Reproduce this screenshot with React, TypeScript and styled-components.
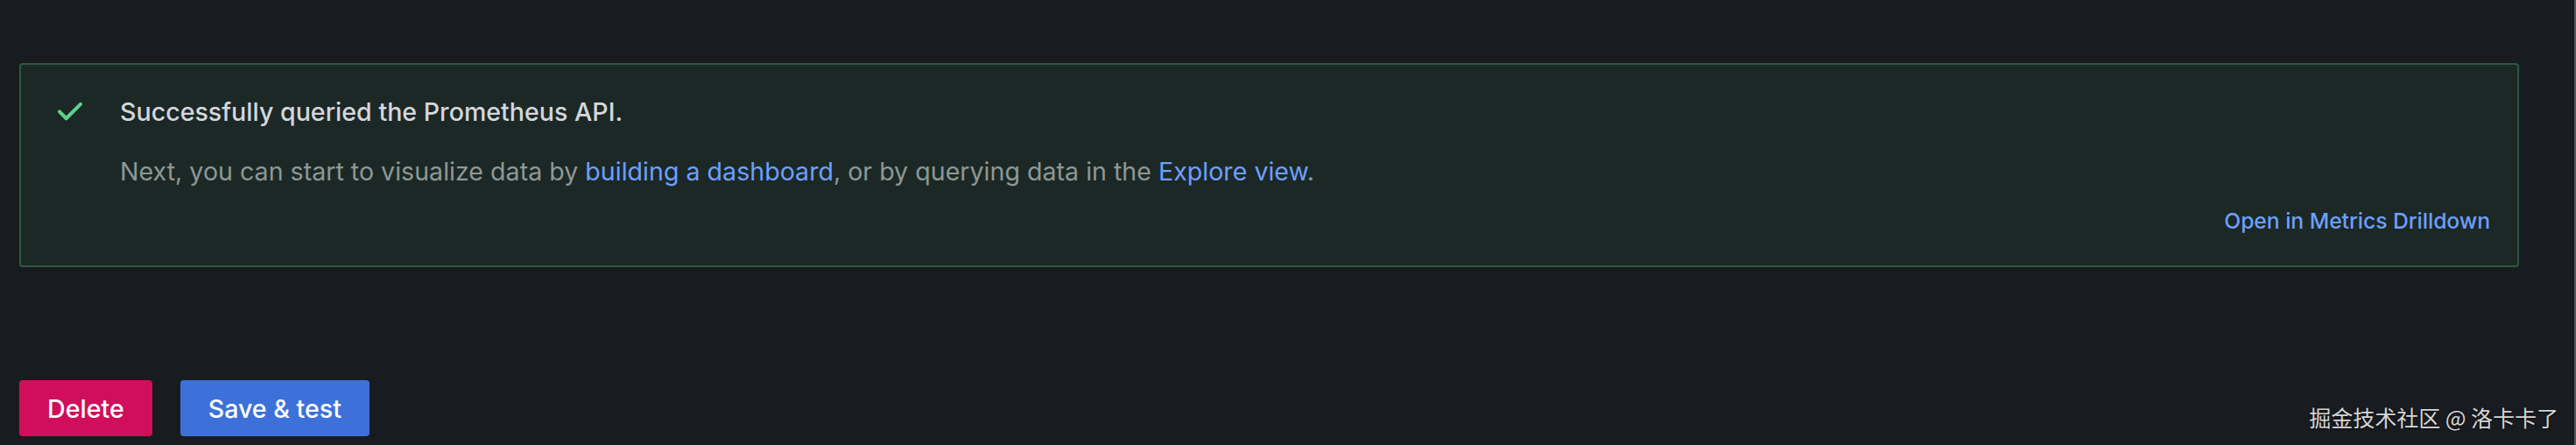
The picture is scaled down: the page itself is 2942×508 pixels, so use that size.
import styled, { createGlobalStyle } from 'styled-components';

const GlobalStyle = createGlobalStyle`
  html, body {
    margin: 0;
    padding: 0;
    background: #181b1f;
  }

  body {
    font-family: Inter, "Noto Sans", "Liberation Sans", sans-serif;
    color: #ccccdc;
  }
`;

const Page = styled.div`
  display: flex;
  min-height: 100vh;
  position: relative;
`;

const Main = styled.main`
  flex: 1;
  display: flex;
  flex-direction: column;
  padding: 72px 63px 0 22px;
`;

const ScrollEdge = styled.div`
  width: 2px;
  background: #54575c;
`;

const Alert = styled.div`
  display: flex;
  gap: 33px;
  padding: 29px 15px 27px 32px;
  background: #1b2825;
  border: 2px solid #2d5940;
  border-radius: 4px;
`;

const IconBox = styled.div`
  width: 48px;
  height: 48px;
  flex-shrink: 0;
  color: #5fd08c;

  svg {
    display: block;
    width: 48px;
    height: 48px;
  }
`;

const Content = styled.div`
  flex: 1;
  display: flex;
  flex-direction: column;
`;

const Title = styled.div`
  margin-top: 4px;
  font-size: 28.6px;
  line-height: 42px;
  font-weight: 500;
  color: #d4d6dd;
`;

const Description = styled.p`
  margin: 26px 0 0;
  font-size: 28.6px;
  line-height: 42px;
  color: #8d9896;
`;

const Link = styled.a`
  color: #6e9fff;
  text-decoration: none;
`;

const Actions = styled.div`
  display: flex;
  justify-content: flex-end;
  margin-top: 11px;
`;

const TextButton = styled.button`
  height: 48px;
  padding: 0 16px;
  border: none;
  background: transparent;
  font-family: inherit;
  font-size: 24.6px;
  font-weight: 500;
  color: #6e9fff;
  cursor: pointer;
`;

const ButtonRow = styled.div`
  display: flex;
  gap: 32px;
  margin-top: 129px;
`;

const Button = styled.button<{ $variant: 'destructive' | 'primary' }>`
  height: 64px;
  padding: 0 32px;
  border: none;
  border-radius: 4px;
  font-family: inherit;
  font-size: 28.6px;
  font-weight: 500;
  color: #ffffff;
  background: ${(p) => (p.$variant === 'destructive' ? '#d10e5c' : '#3d71d9')};
  cursor: pointer;
`;

const Watermark = styled.div`
  position: absolute;
  right: 20px;
  bottom: 14px;
  font-family: "Noto Sans CJK SC", "Noto Sans", sans-serif;
  font-size: 25px;
  line-height: 36px;
  color: #d6d6d6;
  text-shadow: 0 1px 2px rgba(0, 0, 0, 0.6);
  pointer-events: none;
`;

function CheckIcon() {
  return (
    <svg viewBox="0 0 24 24" fill="currentColor" aria-hidden>
      <path d="M18.71,7.21a1,1,0,0,0-1.42,0L9.84,14.67,6.71,11.53A1,1,0,1,0,5.29,13l3.84,3.84a1,1,0,0,0,1.42,0l8.16-8.16A1,1,0,0,0,18.71,7.21Z" />
    </svg>
  );
}

export default function App() {
  return (
    <>
      <GlobalStyle />
      <Page>
        <Main>
          <Alert role="status">
            <IconBox>
              <CheckIcon />
            </IconBox>
            <Content>
              <Title>Successfully queried the Prometheus API.</Title>
              <Description>
                Next, you can start to visualize data by <Link href="#">building a dashboard</Link>, or by
                querying data in the <Link href="#">Explore view</Link>.
              </Description>
              <Actions>
                <TextButton>Open in Metrics Drilldown</TextButton>
              </Actions>
            </Content>
          </Alert>
          <ButtonRow>
            <Button $variant="destructive">Delete</Button>
            <Button $variant="primary">Save &amp; test</Button>
          </ButtonRow>
        </Main>
        <ScrollEdge />
        <Watermark>掘金技术社区 @ 洛卡卡了</Watermark>
      </Page>
    </>
  );
}
